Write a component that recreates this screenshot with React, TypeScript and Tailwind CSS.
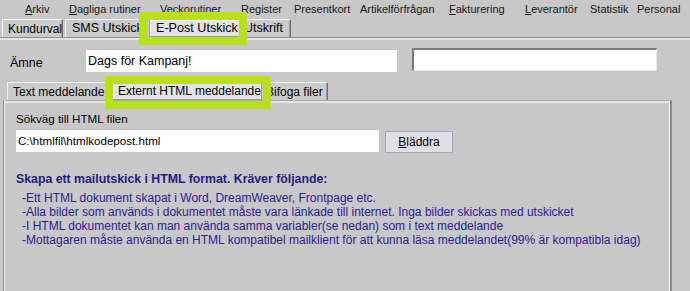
import React from "react";

const font = { fontFamily: '"Liberation Sans", Arial, sans-serif' };

function MenuItem({ w, u, rest }: { w: string; u?: string; rest: string }) {
  return (
    <div className={`${w} shrink-0 whitespace-nowrap`}>
      {u ? <span className="underline underline-offset-[1px]">{u}</span> : null}
      {rest}
    </div>
  );
}

function Tab({
  w,
  label,
  selected,
  size = "text-[12px]",
  pad = "pl-[5px]",
}: {
  w: string;
  label: string;
  selected?: boolean;
  size?: string;
  pad?: string;
}) {
  return (
    <div
      className={`${w} ${size} ${pad} h-[18px] shrink-0 flex items-center whitespace-nowrap overflow-hidden text-black ${
        selected
          ? "bg-[#e2e2e8] border border-[#9a9a9a] shadow-[inset_1px_1px_0_#ffffff]"
          : "bg-[#cbcbcb] border-t border-l border-[#f2f2f2] border-r border-r-[#6e6e6e] shadow-[inset_-1px_0_0_#9e9e9e]"
      }`}
    >
      {label}
    </div>
  );
}

export default function App() {
  return (
    <div className="relative w-[690px] h-[291px] overflow-hidden bg-[#c8c8c8] text-black flex flex-col" style={font}>
      {/* menu bar */}
      <div className="h-[18px] shrink-0 flex items-center pl-[25px] text-[11px] text-[#161616]">
        <MenuItem w="w-[44px]" u="A" rest="rkiv" />
        <MenuItem w="w-[91px]" u="D" rest="agliga rutiner" />
        <MenuItem w="w-[81px]" rest="Veckorutiner" />
        <MenuItem w="w-[53px]" rest="Register" />
        <MenuItem w="w-[66px]" rest="Presentkort" />
        <MenuItem w="w-[89px]" rest="Artikelförfrågan" />
        <MenuItem w="w-[76px]" u="F" rest="akturering" />
        <MenuItem w="w-[65px]" u="L" rest="everantör" />
        <MenuItem w="w-[47px]" rest="Statistik" />
        <MenuItem w="w-[60px]" rest="Personal" />
      </div>

      {/* top tabs */}
      <div className="h-[19px] shrink-0 flex items-end pl-[2px] gap-[2px]">
        <Tab w="w-[61px]" label="Kundurval" />
        <Tab w="w-[82px]" label="SMS Utskick" size="text-[12.5px]" pad="pl-[6px]" />
        <Tab w="w-[91px]" label="E-Post Utskick" selected size="text-[12.6px]" pad="pl-[6px]" />
        <Tab w="w-[49px]" label="Utskrift" size="text-[12.5px]" pad="pl-[1px]" />
      </div>

      {/* outer panel */}
      <div className="flex-1 min-h-0 flex flex-col border-t border-[#8e8e8e] shadow-[inset_0_2px_0_#e6e6e6] pt-[12px] overflow-hidden">
        <div className="flex items-start h-[22px] shrink-0">
          <div className="w-[86px] pl-[10px] pt-[6px] text-[12.5px] leading-[14px]">Ämne</div>
          <div className="w-[311px] h-[22px] bg-white flex items-center pl-[2px] text-[12.5px]">Dags för Kampanj!</div>
          <div className="ml-[15px] -mt-[2px] w-[245px] h-[23px] bg-white border-t-2 border-l-2 border-[#7a7a7a] border-b border-r border-b-[#e8e8e8] border-r-[#e8e8e8]" />
        </div>

        {/* second tabs */}
        <div className="mt-[11px] h-[17px] shrink-0 flex items-end pl-[7px] gap-[1px]">
          <Tab w="w-[104px]" label="Text meddelande" />
          <Tab w="w-[150px]" label="Externt HTML meddelande" selected />
          <Tab w="w-[65px]" label="Bifoga filer" pad="pl-[2px]" />
        </div>

        {/* inner panel */}
        <div className="flex-1 min-h-[200px] ml-[3px] w-[669px] bg-[#c8c8c8] flex">
          <div className="w-[1px] bg-[#8a8a8a]" />
          <div className="w-[1px] bg-[#ececec]" />
          <div className="flex-1 flex flex-col">
            <div className="h-[1px] bg-[#a8a8a8]" />
            <div className="h-[2px] bg-[#e6e6e6]" />
            <div className="pl-[11px] pt-[9px]">
              <div className="text-[11.6px] leading-[14px]">Sökväg till HTML filen</div>
              <div className="mt-[4px] flex items-start gap-[6px]">
                <div className="w-[363px] h-[22px] bg-white flex items-center pl-[2px] text-[11.6px]">
                  C:\htmlfil\htmlkodepost.html
                </div>
                <div className="w-[68px] h-[22px] mt-[1px] bg-[#e0dfe7] border border-[#a9a9b4] flex items-center justify-center text-[12px]">
                  <span>
                    <span className="underline underline-offset-[1px]">B</span>läddra
                  </span>
                </div>
              </div>

              <div className="mt-[19px] text-[12.3px] leading-[15px] font-bold text-[#1f1c84]">
                Skapa ett mailutskick i HTML format. Kräver följande:
              </div>
              <div className="mt-[4px] pl-[6px] text-[12px] leading-[14px] text-[#2a2293]">
                <div>-Ett HTML dokument skapat i Word, DreamWeaver, Frontpage etc.</div>
                <div>-Alla bilder som används i dokumentet måste vara länkade till internet. Inga bilder skickas med utskicket</div>
                <div>-I HTML dokumentet kan man använda samma variabler(se nedan) som i text meddelande</div>
                <div>-Mottagaren måste använda en HTML kompatibel mailklient för att kunna läsa meddelandet(99% är kompatibla idag)</div>
              </div>
            </div>
          </div>
          <div className="w-[1px] bg-[#ededed]" />
          <div className="w-[2px] bg-[#8a8a8a]" />
        </div>
      </div>

      {/* green highlight annotations */}
      <div className="absolute left-[139px] top-[12px] w-[108px] h-[33px] border-[8px] border-[#b8e11c]" />
      <div className="absolute left-[105px] top-[76px] w-[166px] h-[33px] border-[8px] border-[#b8e11c]" />
    </div>
  );
}
